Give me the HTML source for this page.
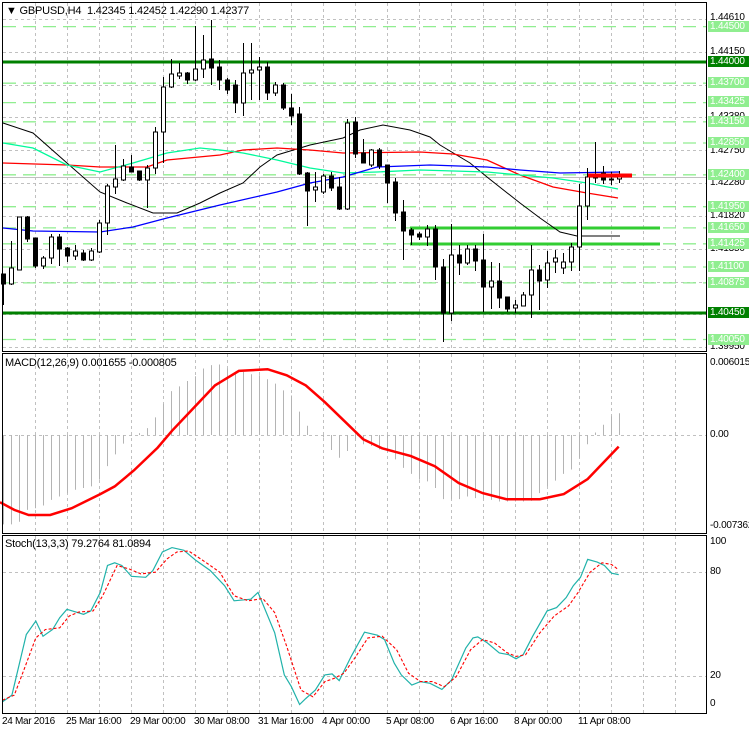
<!DOCTYPE html>
<html><head><meta charset="utf-8"><style>
html,body{margin:0;padding:0;background:#fff;}
body{width:749px;height:731px;overflow:hidden;position:relative;font-family:"Liberation Sans",sans-serif;}
svg{position:absolute;left:0;top:0;}
.t{position:absolute;font-size:11px;color:#000;white-space:nowrap;line-height:12px;letter-spacing:-0.2px;}
.lb{position:absolute;left:708px;width:41px;height:11px;font-size:10px;line-height:11px;color:#fff;background:#90ee90;padding-left:2px;box-sizing:border-box;letter-spacing:-0.2px;}
.dg{background:#008000;}
.ax{position:absolute;left:710px;font-size:10px;line-height:11px;color:#000;letter-spacing:-0.2px;white-space:nowrap;}
.tl{position:absolute;top:716px;font-size:10px;color:#000;white-space:nowrap;letter-spacing:-0.3px;}
</style></head><body>
<svg id="s" width="749" height="731" xmlns="http://www.w3.org/2000/svg"></svg>

<div class="t" style="left:6px;top:5px">&#9660; GBPUSD,H4&nbsp; 1.42345 1.42452 1.42290 1.42377</div>
<div class="t" style="left:5px;top:357px">MACD(12,26,9) 0.001655 -0.000805</div>
<div class="t" style="left:5px;top:538px">Stoch(13,3,3) 79.2764 81.0894</div>

<div class="ax" style="top:12px">1.44610</div>
<div class="ax" style="top:46px">1.44150</div>
<div class="ax" style="top:111px">1.43380</div>
<div class="ax" style="top:145px">1.42750</div>
<div class="ax" style="top:177px">1.42280</div>
<div class="ax" style="top:210px">1.41820</div>
<div class="ax" style="top:243px">1.41350</div>
<div class="ax" style="top:308px">1.40420</div>
<div class="ax" style="top:341px">1.39950</div>

<div class="lb" style="top:21px">1.44500</div>
<div class="lb dg" style="top:56px">1.44000</div>
<div class="lb" style="top:77px">1.43700</div>
<div class="lb" style="top:96px">1.43425</div>
<div class="lb" style="top:116px">1.43150</div>
<div class="lb" style="top:137px">1.42850</div>
<div class="lb" style="top:169px">1.42400</div>
<div class="lb" style="top:201px">1.41950</div>
<div class="lb" style="top:222px">1.41650</div>
<div class="lb" style="top:238px">1.41425</div>
<div class="lb" style="top:261px">1.41100</div>
<div class="lb" style="top:277px">1.40875</div>
<div class="lb dg" style="top:307px">1.40450</div>
<div class="lb" style="top:334px">1.40050</div>

<div class="ax" style="top:357px">0.006015</div>
<div class="ax" style="top:429px">0.00</div>
<div class="ax" style="top:520px">-0.007362</div>
<div class="ax" style="top:536px">100</div>
<div class="ax" style="top:566px">80</div>
<div class="ax" style="top:670px">20</div>
<div class="ax" style="top:698px">0</div>

<div class="tl" style="left:2px">24 Mar 2016</div>
<div class="tl" style="left:66px">25 Mar 16:00</div>
<div class="tl" style="left:130px">29 Mar 00:00</div>
<div class="tl" style="left:194px">30 Mar 08:00</div>
<div class="tl" style="left:258px">31 Mar 16:00</div>
<div class="tl" style="left:322px">4 Apr 00:00</div>
<div class="tl" style="left:386px">5 Apr 08:00</div>
<div class="tl" style="left:450px">6 Apr 16:00</div>
<div class="tl" style="left:514px">8 Apr 00:00</div>
<div class="tl" style="left:578px">11 Apr 08:00</div>

<script>
var s=document.getElementById('s'),h='';
function L(x1,y1,x2,y2,c,w,d){h+='<line x1="'+x1+'" y1="'+y1+'" x2="'+x2+'" y2="'+y2+'" stroke="'+c+'" stroke-width="'+w+'"'+(d?' stroke-dasharray="'+d+'"':'')+'/>';}
function P(pts,c,w,d){h+='<polyline fill="none" points="'+pts.map(function(p){return p[0]+','+p[1]}).join(' ')+'" stroke="'+c+'" stroke-width="'+w+'"'+(d?' stroke-dasharray="'+d+'"':'')+'/>';}
var R=707;
for(var x=35;x<R;x+=32){L(x+.5,3,x+.5,352,'#c0c0c0',1,'3,3');L(x+.5,354,x+.5,534,'#c0c0c0',1,'3,3');L(x+.5,536,x+.5,713,'#c0c0c0',1,'3,3');}
[19,52,84.5,117,150,183,216,249,282,314,347].forEach(function(y){L(3,Math.round(y)+.5,R,Math.round(y)+.5,'#c0c0c0',1,'3,3');});
L(3,435.5,R,435.5,'#c0c0c0',1,'3,3');
L(3,572.5,R,572.5,'#c0c0c0',1,'3,3');L(3,676.5,R,676.5,'#c0c0c0',1,'3,3');
[26.6,83.2,102.6,121.8,143,174.8,206.7,227.9,243.8,267,282.9,339.5].forEach(function(y){L(3,y,R,y,'#90ee90',1.3,'13,7');});
L(3,62,R,62,'#008000',3);L(3,313,R,313,'#008000',3);
L(410,228,660,228,'#32cd32',3);L(410,244,660,244,'#32cd32',3);
L(3,177.5,R,177.5,'#c0c0c0',1);
P([[3,123],[33,133],[67,163],[100,192],[127,203],[153,213],[177,213],[200,203],[220,193],[243,183],[260,167],[277,155],[310,145],[343,138],[360,130],[383,125],[410,130],[430,137],[440,145],[470,163],[487,177],[520,203],[540,218],[560,232],[577,236],[620,236]],'#000',1);
P([[3,163],[67,165],[100,167],[147,167],[167,160],[220,155],[243,150],[277,148],[310,150],[343,153],[420,152],[453,154],[487,160],[520,175],[553,187],[587,193],[618,198]],'#ff0000',1.3);
P([[3,143],[33,148],[67,165],[100,172],[133,163],[167,153],[200,148],[220,150],[243,153],[277,160],[310,168],[343,173],[377,172],[420,170],[487,172],[520,175],[553,178],[587,183],[618,189]],'#00fa9a',1.3);
P([[3,228],[33,231],[100,232],[133,227],[167,218],[220,205],[277,192],[310,183],[343,177],[377,167],[430,165],[487,167],[520,170],[560,173],[620,172]],'#0000ff',1.3);
var C=[[274,284,274,305,0],[268,284,241,285,1],[217,270,217,270,1],[217,239,216,242,0],[238,266,238,268,0],[258,266,256,269,1],[237,258,234,264,1],[237,249,234,266,0],[248,256,247,262,0],[251,256,245,260,1],[253,260,250,261,0],[251,260,248,261,1],[223,252,220,253,1],[186,223,184,235,1],[179,187,145,194,1],[166,180,159,181,1],[167,172,155,172,0],[171,180,171,181,0],[168,180,165,208,1],[132,168,127,174,1],[87,132,77,163,1],[74,87,59,88,1],[73,76,63,79,1],[73,80,72,84,0],[69,80,26,81,1],[60,69,35,78,1],[59,68,20,85,0],[67,80,60,90,0],[80,90,78,94,0],[85,103,80,113,0],[73,103,43,116,1],[70,73,43,100,1],[67,70,57,100,1],[67,93,62,100,0],[85,93,82,96,1],[85,108,83,110,0],[108,116,94,125,0],[114,174,107,175,0],[173,191,172,226,0],[187,190,172,202,1],[176,192,174,194,1],[176,188,172,191,0],[187,209,177,210,0],[123,209,119,210,1],[122,154,117,158,0],[153,163,139,163,0],[150,165,149,167,1],[150,166,148,169,0],[165,183,165,203,0],[182,213,178,221,0],[212,231,200,260,0],[230,235,228,245,0],[234,237,232,240,0],[229,237,225,246,1],[229,267,225,280,0],[267,313,259,342,0],[255,313,224,321,1],[255,263,245,275,0],[249,263,245,265,1],[249,261,245,271,0],[260,287,234,312,0],[281,287,262,309,1],[281,298,263,308,0],[297,309,297,312,0],[305,308,300,313,1],[295,306,292,306,1],[270,295,245,318,1],[270,281,265,310,0],[263,280,251,288,1],[258,262,250,273,1],[262,268,253,274,1],[247,262,243,271,1],[206,247,184,271,1],[177,206,168,220,1],[174,178,142,183,1],[173,180,166,184,0],[179,180,172,185,0],[177,179,171,183,1]];
C.forEach(function(c,i){var x=3.5+8*i;L(x,c[2],x,c[3],'#000',1);h+='<rect x="'+(x-2)+'" y="'+c[0]+'" width="4" height="'+Math.max(1,c[1]-c[0])+'" fill="'+(c[4]?'#fff':'#000')+'" stroke="#000" stroke-width="1"/>';});
L(588,175.5,632,175.5,'#ff0000',4);
var Hs=[518,518,510,475,470,462,445,435,425,415,410,405,385,345,310,278,255,247,232,200,160,122,108,92,78,55,45,43,55,65,65,72,75,87,100,120,135,183,225,253,260,297,320,300,265,280,285,295,305,325,350,368,385,390,410,443,443,443,435,440,443,445,450,450,450,450,448,425,405,388,368,355,320,280,245,222,197,188];
Hs.forEach(function(Y,i){var x=3.5+8*i;L(x,435,x,Y/2.97+350,'#b4b4b4',1);});
function Q(a){return a.map(function(p){return [(p[0]/2.093).toFixed(1),(p[1]/2.97+350).toFixed(1)];});}
P(Q([[0,452],[30,475],[60,490],[105,490],[150,470],[210,428],[240,405],[280,358],[330,290],[360,240],[400,180],[450,105],[500,62],[560,57],[600,75],[640,105],[680,155],[720,210],[760,265],[800,292],[860,315],[910,345],[960,395],[1010,425],[1060,443],[1130,443],[1180,428],[1230,383],[1295,287]]),'#ff0000',2.5);
P(Q([[5,1045],[25,1025],[55,845],[75,805],[90,850],[110,830],[125,795],[140,770],[175,785],[190,775],[210,720],[225,640],[240,632],[255,640],[275,672],[305,675],[320,655],[340,600],[360,587],[385,595],[410,625],[440,655],[470,700],[490,745],[525,740],[540,720],[575,840],[595,965],[610,1000],[627,1053],[640,1035],[660,1010],[680,965],[695,962],[710,982],[735,910],[763,838],[790,847],[805,860],[825,930],[840,965],[862,995],[880,985],[900,990],[925,1008],[945,980],[975,885],[990,855],[1000,852],[1020,870],[1045,900],[1065,905],[1080,917],[1095,905],[1115,850],[1145,775],[1165,765],[1185,735],[1200,700],[1215,675],[1230,622],[1250,630],[1265,640],[1280,663],[1295,667]]),'#20b2aa',1.2);
P(Q([[5,1040],[30,1025],[50,950],[75,855],[95,830],[125,825],[145,790],[165,778],[195,775],[215,730],[245,640],[270,650],[295,665],[325,660],[350,620],[370,600],[395,597],[430,630],[460,660],[490,730],[520,745],[550,738],[575,780],[600,880],[630,1010],[655,1030],[680,985],[700,975],[720,960],[745,910],[770,855],[800,850],[830,890],[855,960],[880,985],[905,985],[930,1000],[955,970],[985,890],[1010,860],[1035,870],[1060,898],[1080,910],[1100,905],[1130,840],[1160,790],[1190,760],[1210,720],[1235,660],[1260,632],[1280,637],[1295,653]]),'#ff0000',1.1,'3,2');
h+='<rect x="2.5" y="2.5" width="704" height="349" fill="none" stroke="#000"/>';
h+='<rect x="2.5" y="353.5" width="704" height="180" fill="none" stroke="#000"/>';
h+='<rect x="2.5" y="535.5" width="704" height="178" fill="none" stroke="#000"/>';
s.innerHTML=h;
</script>
</body></html>
